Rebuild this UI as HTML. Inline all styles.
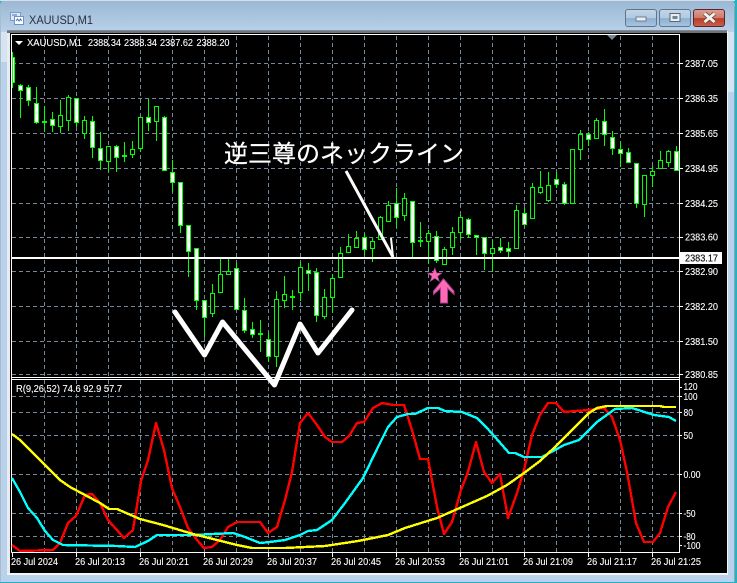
<!DOCTYPE html>
<html><head><meta charset="utf-8"><title>XAUUSD,M1</title>
<style>
html,body{margin:0;padding:0;width:737px;height:583px;overflow:hidden;background:#1fb3c4}
svg{display:block;position:absolute;left:0;top:0}
text{font-family:"Liberation Sans","Noto Sans CJK JP",sans-serif;font-size:10.4px;fill:#fff;stroke:#fff;stroke-width:.12px}
</style></head><body>
<svg width="737" height="583" viewBox="0 0 737 583" xmlns="http://www.w3.org/2000/svg">
<defs>
<linearGradient id="fr" x1="0" y1="0" x2="0" y2="1"><stop offset="0" stop-color="#9ab7d3"/><stop offset=".055" stop-color="#b9d1ea"/><stop offset="1" stop-color="#b9d1ea"/></linearGradient>
<linearGradient id="btn" x1="0" y1="0" x2="0" y2="1"><stop offset="0" stop-color="#c3d5e8"/><stop offset=".5" stop-color="#b2c9e0"/><stop offset=".52" stop-color="#8eafcf"/><stop offset="1" stop-color="#a9c5e0"/></linearGradient>
<linearGradient id="cls" x1="0" y1="0" x2="0" y2="1"><stop offset="0" stop-color="#d9a197"/><stop offset=".5" stop-color="#cf7867"/><stop offset=".52" stop-color="#b93d28"/><stop offset="1" stop-color="#c9604a"/></linearGradient>
</defs>
<rect x="0" y="0" width="737" height="583" fill="#1fb3c4"/>
<path d="M0 6Q0 0 6 0H729Q735 0 735 6V582H0Z" fill="url(#fr)"/>
<rect x="0" y="0" width="735" height="1" fill="#d8dfe6"/>
<rect x="1" y="32" width="6" height="30" fill="#d6e3f1"/>
<rect x="728" y="32" width="6" height="60" fill="#d6e3f1"/>
<rect x="734" y="6" width="1" height="576" fill="#8ea3b5"/>
<rect x="0" y="6" width="1" height="576" fill="#a9bccc"/>

<!-- title icon -->
<rect x="10.5" y="12.5" width="10" height="8" fill="#dbe8f6" stroke="#7d9cc6"/>
<rect x="14.5" y="16.5" width="9" height="8" fill="#fff" stroke="#6f93c4"/>
<path d="M12 15h5M16 21l1.500-2 1.500 2 1.500-2 1 2" fill="none" stroke="#3f74bd"/>
<text x="29" y="24" style="font-size:12.4px;fill:#26323f;stroke:none" textLength="64" lengthAdjust="spacingAndGlyphs">XAUUSD,M1</text>

<!-- caption buttons -->
<rect x="625.5" y="9.500" width="31" height="17" rx="2.500" fill="url(#btn)" stroke="#5d7690"/>
<rect x="636" y="17" width="10" height="4" fill="#e9eef3" stroke="#56697c" stroke-width=".8"/>
<rect x="659.5" y="9.500" width="31" height="17" rx="2.500" fill="url(#btn)" stroke="#5d7690"/>
<rect x="670" y="13.500" width="10" height="8" fill="#e9eef3" stroke="#56697c"/>
<rect x="672.500" y="16" width="5" height="3" fill="#6f8296"/>
<rect x="693.5" y="9.500" width="31" height="17" rx="2.500" fill="url(#cls)" stroke="#5a2530"/>
<path d="M704.500 13.500L714.500 22M714.500 13.500L704.500 22" stroke="#5e3a34" stroke-width="4.400"/>
<path d="M704.500 13.500L714.500 22M714.500 13.500L704.500 22" stroke="#f2f2f2" stroke-width="2.800"/>

<!-- client -->
<rect x="7" y="30" width="720" height="1" fill="#7f8c98"/>
<rect x="7" y="31" width="3" height="544" fill="#e8ecf0"/>
<rect x="7" y="31" width="720" height="2" fill="#6f7278"/>
<rect x="10" y="33" width="717" height="540" fill="#000"/>
<rect x="7" y="573" width="720" height="2" fill="#f2f4f6"/>
<rect x="727" y="31" width="1" height="544" fill="#f2f4f6"/>

<!-- grid -->
<g stroke="#778899" stroke-width="1" stroke-dasharray="4 3" shape-rendering="crispEdges" fill="none">
<path d="M12 63.500H679M12 98.500H679M12 133.500H679M12 168.500H679M12 203.500H679M12 237.500H679M12 271.500H679M12 306.500H679M12 341.500H679M12 374.500H679"/>
<path d="M12 396.500H679M12 412.500H679M12 435.500H679M12 474.500H679M12 513.500H679M12 536.500H679"/>
<path d="M44.500 36V377M76.500 36V377M108.500 36V377M140.500 36V377M172.500 36V377M204.500 36V377M236.500 36V377M268.500 36V377M300.500 36V377M332.500 36V377M364.500 36V377M396.500 36V377M428.500 36V377M460.500 36V377M492.500 36V377M524.500 36V377M556.500 36V377M588.500 36V377M620.500 36V377M652.500 36V377"/>
<path d="M44.500 380V552M76.500 380V552M108.500 380V552M140.500 380V552M172.500 380V552M204.500 380V552M236.500 380V552M268.500 380V552M300.500 380V552M332.500 380V552M364.500 380V552M396.500 380V552M428.500 380V552M460.500 380V552M492.500 380V552M524.500 380V552M556.500 380V552M588.500 380V552M620.500 380V552M652.500 380V552"/>
</g>

<!-- wicks -->
<path shape-rendering="crispEdges" fill="none" stroke="#0f0" stroke-width="1" d="M12.500 52V88M20.500 84V118M28.500 85V106M36.500 87V124M44.500 106V132M52.500 112V132M60.500 100V133M68.500 95V131M76.500 98V127M84.500 116V139M92.500 116V158M100.500 132V170M108.500 146V172M116.500 145V172M124.500 142V162M132.500 141V158M140.500 117V152M148.500 99V131M156.500 106V141M164.500 116V171M172.500 160V192M180.500 182V233M188.500 225V277M196.500 248V310M204.500 300V337M212.500 284V317M220.500 258V292M228.500 259V275M236.500 263V309M244.500 298V333M252.500 322V338M260.500 320V352M268.500 333V362M276.500 291V367M284.500 276V308M292.500 290V310M300.500 262V301M308.500 263V291M316.500 268V322M324.500 289V319M332.500 274V313M340.500 247V277M348.500 234V252M356.500 231V247M364.500 233V255M372.500 238V262M380.500 216V239M388.500 201V221M396.500 188V228M404.500 193V221M412.500 201V257M420.500 222V247M428.500 230V264M436.500 231V263M444.500 247V264M452.500 227V255M460.500 215V240M468.500 218V238M476.500 235V255M484.500 237V270M492.500 240V272M500.500 238V253M508.500 242V257M516.500 205V248M524.500 208V224M532.500 183V218M540.500 171V194M548.500 172V202M556.500 172V188M564.500 182V205M572.500 149V203M580.500 130V160M588.500 132V146M596.500 118V138M604.500 109V146M612.500 131V155M620.500 142V167M628.500 148V162M636.500 163V208M644.500 175V217M652.500 166V187M660.500 151V168M668.500 150V167M676.500 146V170"/>
<!-- doji -->
<path shape-rendering="crispEdges" fill="none" stroke="#0f0" stroke-width="2" d="M42 122h5M122 156h5M258 334h5M290 297h5M418 241h5"/>
<!-- hollow bodies -->
<path shape-rendering="crispEdges" fill="#000" stroke="#0f0" stroke-width="1" d="M58.500 115.500h4v11h-4zM66.500 97.500h4v23h-4zM82.500 120.500h4v13h-4zM130.500 149.500h4v5h-4zM106.500 146.500h4v15h-4zM138.500 117.500h4v31h-4zM154.500 106.500h4v15h-4zM210.500 293.500h4v20h-4zM218.500 274.500h4v18h-4zM226.500 271.500h4v3h-4zM274.500 299.500h4v57h-4zM282.500 294.500h4v6h-4zM298.500 267.500h4v25h-4zM322.500 297.500h4v19h-4zM330.500 278.500h4v19h-4zM338.500 253.500h4v24h-4zM346.500 246.500h4v6h-4zM354.500 238.500h4v9h-4zM370.500 241.500h4v7h-4zM378.500 217.500h4v22h-4zM386.500 205.500h4v16h-4zM402.500 198.500h4v17h-4zM426.500 233.500h4v8h-4zM442.500 249.500h4v15h-4zM450.500 232.500h4v15h-4zM458.500 217.500h4v15h-4zM490.500 248.500h4v5h-4zM514.500 210.500h4v38h-4zM530.500 187.500h4v31h-4zM538.500 187.500h4v5h-4zM546.500 185.500h4v15h-4zM570.500 149.500h4v54h-4zM578.500 134.500h4v15h-4zM594.500 120.500h4v18h-4zM642.500 175.500h4v29h-4zM650.500 171.500h4v4h-4zM658.500 160.500h4v8h-4zM666.500 151.500h4v11h-4z"/>
<!-- white bodies -->
<path shape-rendering="crispEdges" fill="#fff" stroke="#0f0" stroke-width="1" d="M12.500 57.500h2v25h-2zM18.500 85.500h4v5h-4zM26.500 87.500h4v13h-4zM34.500 103.500h4v19h-4zM50.500 119.500h4v6h-4zM74.500 98.500h4v24h-4zM90.500 121.500h4v26h-4zM98.500 148.500h4v12h-4zM114.500 146.500h4v11h-4zM146.500 117.500h4v5h-4zM162.500 117.500h4v53h-4zM170.500 172.500h4v10h-4zM178.500 182.500h4v43h-4zM186.500 225.500h4v26h-4zM194.500 248.500h4v52h-4zM202.500 300.500h4v17h-4zM234.500 268.500h4v41h-4zM242.500 310.500h4v20h-4zM250.500 329.500h4v5h-4zM266.500 339.500h4v17h-4zM306.500 270.500h4v3h-4zM314.500 272.500h4v43h-4zM362.500 237.500h4v12h-4zM394.500 203.500h4v14h-4zM410.500 201.500h4v41h-4zM434.500 236.500h4v24h-4zM466.500 219.500h4v15h-4zM474.500 235.500h4v2h-4zM482.500 237.500h4v16h-4zM498.500 247.500h4v3h-4zM506.500 248.500h4v3h-4zM522.500 213.500h4v11h-4zM554.500 179.500h4v5h-4zM562.500 184.500h4v19h-4zM586.500 134.500h4v5h-4zM602.500 121.500h4v13h-4zM610.500 137.500h4v11h-4zM618.500 149.500h4v4h-4zM626.500 152.500h4v10h-4zM634.500 163.500h4v40h-4zM674.500 151.500h4v19h-4z"/>

<!-- chart frames -->
<g shape-rendering="crispEdges" fill="none" stroke="#fff" stroke-width="1">
<path d="M11.500 552.500V34.500H679.500V552.500H11.500"/>
<path d="M11 377.500H680M11 379.500H680"/>
<path d="M680 63.500h3M680 98.500h3M680 133.500h3M680 168.500h3M680 203.500h3M680 237.500h3M680 271.500h3M680 306.500h3M680 341.500h3M680 374.500h3"/>
<path d="M680 387.500h2M680 396.500h2M680 412.500h2M680 435.500h2M680 474.500h2M680 513.500h2M680 536.500h2M680 545.500h2"/>
<path d="M12.500 553V557M76.500 553V557M140.500 553V557M204.500 553V557M268.500 553V557M332.500 553V557M396.500 553V557M460.500 553V557M524.500 553V557M588.500 553V557M652.500 553V557"/>
</g>

<!-- corner markers -->
<path d="M607 35h10l-5 5z" fill="#778899"/>
<path d="M15 41h8l-4 4z" fill="#fff"/>

<!-- indicator lines -->
<g fill="none" stroke-width="2.400" shape-rendering="crispEdges" stroke-linejoin="round">
<polyline stroke="#f00" points="12,545 20,551 53,550 60,543 68,523 76,516 85,495 92,494 100,503 108,520 124,538 133,530 141,481 148,460 156,423 164,450 172,488 180,507 188,528 197,540 204,548 212,547 220,540 228,527 237,522 260,522 268,533 277,527 285,500 292,472 300,423 308,413 317,425 325,437 332,442 342,442 349,436 357,423 364,422 373,408 382,403 393,405 404,405 412,430 420,459 428,459 437,507 444,534 452,522 461,490 468,472 476,442 484,472 492,483 500,474 508,518 517,493 524,470 532,435 540,415 548,403 556,403 564,412 589,410 604,408 612,417 620,440 627,472 636,523 644,542 653,542 660,533 668,507 676,492"/>
<polyline stroke="#0ff" points="12,478 20,492 28,508 37,518 45,531 53,540 63,545 117,546 135,547 148,541 157,535 193,535 233,533 245,537 260,543 270,542 285,540 300,535 308,531 317,530 332,520 345,503 363,478 378,447 388,427 397,417 408,414 415,414 428,408 438,408 445,411 462,412 477,418 487,428 495,437 509,453 515,453 524,457 542,457 555,450 564,445 579,440 597,422 615,409 632,408 654,415 669,417 676,421"/>
<polyline stroke="#ff0" points="12,434 20,440 28,448 45,465 60,480 70,487 100,503 109,509 117,509 140,519 163,525 193,534 237,545 252,548 285,548 325,546 358,541 388,535 405,528 437,518 462,507 487,496 507,485 524,473 540,461 555,447 575,427 589,413 597,408 607,406 660,406 664,407 676,407"/>
</g>

<!-- annotations -->
<rect x="12" y="257" width="668" height="2" fill="#fff"/>
<polyline points="175,312 204.500,355 222.500,322 274.500,385 300,324 318,353 352,310" fill="none" stroke="#fff" stroke-width="5" stroke-linejoin="round" stroke-linecap="round"/>
<path d="M346 171L393 257" stroke="#fff" stroke-width="3" fill="none"/>
<path d="M391 238L393 257" stroke="#fff" stroke-width="2" fill="none"/>
<path d="M434.800 268L436.700 273H442L437.700 276.200L439.300 281.500L434.800 278.300L430.300 281.500L431.900 276.200L427.500 273H432.900Z" fill="#ff69b4" stroke="#a0468c" stroke-width=".6"/>
<path d="M443.500 278L454.500 291V295.500L448 289.500V303.500H440V289.500L433 295.500V291Z" fill="#a8408f"/>
<path d="M443.500 279.500L453.500 291.500V293L447 287V302.500H441V287L434 293V291.500Z" fill="#ff69b4"/>
<text x="224" y="162" style="font-size:24px;stroke-width:.25px" textLength="240">逆三尊のネックライン</text>

<!-- price tag -->
<rect x="680" y="252" width="42" height="12" fill="#fff"/>
<text x="685" y="261.500" style="fill:#000;stroke:#000" textLength="33" lengthAdjust="spacingAndGlyphs">2383.17</text>

<!-- info labels -->
<text x="27" y="46" textLength="55" lengthAdjust="spacingAndGlyphs">XAUUSD,M1</text>
<text x="88" y="46" textLength="33" lengthAdjust="spacingAndGlyphs">2388.34</text>
<text x="124" y="46" textLength="33" lengthAdjust="spacingAndGlyphs">2388.34</text>
<text x="160" y="46" textLength="33" lengthAdjust="spacingAndGlyphs">2387.62</text>
<text x="196.500" y="46" textLength="33" lengthAdjust="spacingAndGlyphs">2388.20</text>
<text x="16" y="392" textLength="106" lengthAdjust="spacingAndGlyphs">R(9,26,52) 74.6 92.9 57.7</text>

<!-- price axis -->
<g>
<text x="685" y="67" textLength="33" lengthAdjust="spacingAndGlyphs">2387.05</text>
<text x="685" y="102" textLength="33" lengthAdjust="spacingAndGlyphs">2386.35</text>
<text x="685" y="137" textLength="33" lengthAdjust="spacingAndGlyphs">2385.65</text>
<text x="685" y="172" textLength="33" lengthAdjust="spacingAndGlyphs">2384.95</text>
<text x="685" y="207" textLength="33" lengthAdjust="spacingAndGlyphs">2384.25</text>
<text x="685" y="240.500" textLength="33" lengthAdjust="spacingAndGlyphs">2383.60</text>
<text x="685" y="275" textLength="33" lengthAdjust="spacingAndGlyphs">2382.90</text>
<text x="685" y="310" textLength="33" lengthAdjust="spacingAndGlyphs">2382.20</text>
<text x="685" y="345" textLength="33" lengthAdjust="spacingAndGlyphs">2381.50</text>
<text x="685" y="378" textLength="33" lengthAdjust="spacingAndGlyphs">2380.85</text>
<text x="683.500" y="390" textLength="14" lengthAdjust="spacingAndGlyphs">120</text>
<text x="683.500" y="400" textLength="14" lengthAdjust="spacingAndGlyphs">100</text>
<text x="683.500" y="416" textLength="9.500" lengthAdjust="spacingAndGlyphs">80</text>
<text x="683.500" y="439" textLength="9.500" lengthAdjust="spacingAndGlyphs">50</text>
<text x="683.500" y="478" textLength="17" lengthAdjust="spacingAndGlyphs">0.00</text>
<text x="683.500" y="517" textLength="12" lengthAdjust="spacingAndGlyphs">-50</text>
<text x="683.500" y="540" textLength="12" lengthAdjust="spacingAndGlyphs">-80</text>
<text x="683.500" y="549" textLength="17" lengthAdjust="spacingAndGlyphs">-100</text>
</g>

<!-- time axis -->
<g>
<text x="11" y="565" textLength="47" lengthAdjust="spacingAndGlyphs">26 Jul 2024</text>
<text x="75" y="565" textLength="50" lengthAdjust="spacingAndGlyphs">26 Jul 20:13</text>
<text x="139" y="565" textLength="50" lengthAdjust="spacingAndGlyphs">26 Jul 20:21</text>
<text x="203" y="565" textLength="50" lengthAdjust="spacingAndGlyphs">26 Jul 20:29</text>
<text x="267" y="565" textLength="50" lengthAdjust="spacingAndGlyphs">26 Jul 20:37</text>
<text x="331" y="565" textLength="50" lengthAdjust="spacingAndGlyphs">26 Jul 20:45</text>
<text x="395" y="565" textLength="50" lengthAdjust="spacingAndGlyphs">26 Jul 20:53</text>
<text x="459" y="565" textLength="50" lengthAdjust="spacingAndGlyphs">26 Jul 21:01</text>
<text x="523" y="565" textLength="50" lengthAdjust="spacingAndGlyphs">26 Jul 21:09</text>
<text x="587" y="565" textLength="50" lengthAdjust="spacingAndGlyphs">26 Jul 21:17</text>
<text x="651" y="565" textLength="50" lengthAdjust="spacingAndGlyphs">26 Jul 21:25</text>
</g>
</svg>
</body></html>
